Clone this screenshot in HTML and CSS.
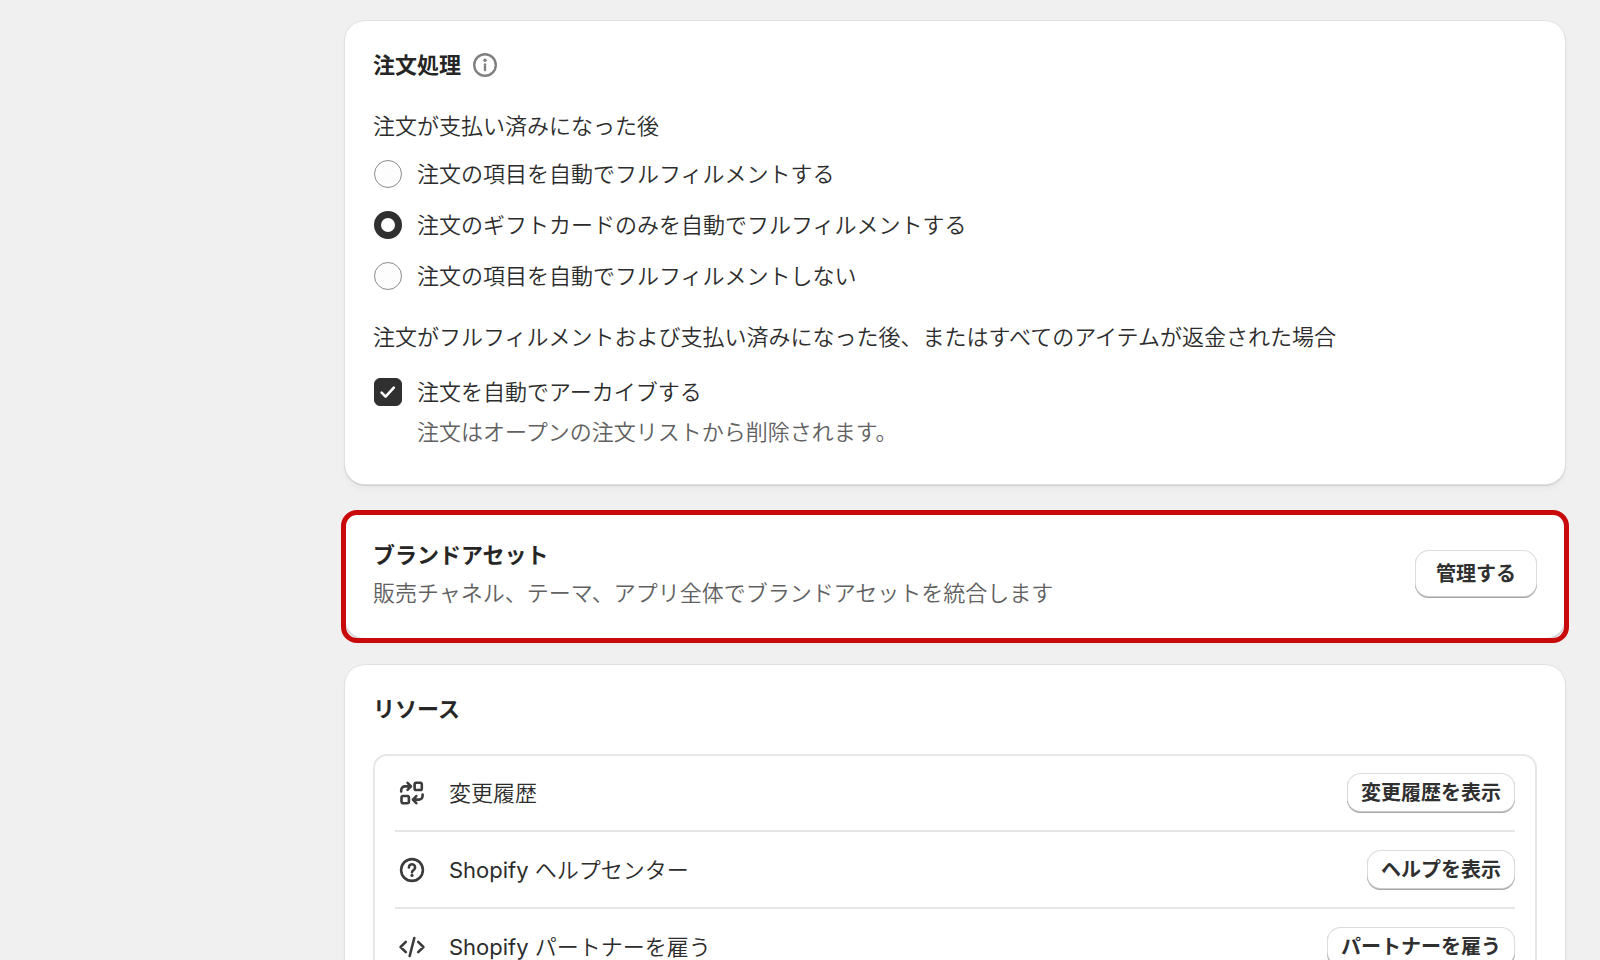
FILE: index.html
```html
<!DOCTYPE html>
<html lang="ja">
<head>
<meta charset="utf-8">
<title>注文処理</title>
<link rel="stylesheet" href="styles.css">
</head>
<body>
<main class="page">
  <section class="card orders">
    <div class="card-title">
      <h2>注文処理</h2>
      <svg class="info" viewBox="0 0 24 24" aria-hidden="true"><circle cx="12" cy="12" r="10.8"/><path d="M12 11.4v5.6"/><circle class="dot" cx="12" cy="7.2" r="1.7"/></svg>
    </div>
    <fieldset class="choices">
      <legend>注文が支払い済みになった後</legend>
      <label class="choice"><input type="radio" name="fulfill"><span>注文の項目を自動でフルフィルメントする</span></label>
      <label class="choice"><input type="radio" name="fulfill" checked><span>注文のギフトカードのみを自動でフルフィルメントする</span></label>
      <label class="choice"><input type="radio" name="fulfill"><span>注文の項目を自動でフルフィルメントしない</span></label>
    </fieldset>
    <fieldset class="archive">
      <legend>注文がフルフィルメントおよび支払い済みになった後、またはすべてのアイテムが返金された場合</legend>
      <label class="choice"><span class="tick"><input type="checkbox" checked aria-describedby="archive-help"><svg viewBox="0 0 28 28" aria-hidden="true"><path d="M7.6 14.6l4 4 8.2-9"/></svg></span><span>注文を自動でアーカイブする</span></label>
      <p class="help" id="archive-help">注文はオープンの注文リストから削除されます。</p>
    </fieldset>
  </section>

  <section class="card brand">
    <div class="brand-text">
      <h2>ブランドアセット</h2>
      <p>販売チャネル、テーマ、アプリ全体でブランドアセットを統合します</p>
    </div>
    <button class="button large" type="button">管理する</button>
  </section>

  <section class="card resources">
    <h2>リソース</h2>
    <ul class="list">
      <li class="row">
        <svg class="icon" viewBox="0 0 28 28" aria-hidden="true"><rect x="16.6" y="3.8" width="7.2" height="7.2" rx="1.6"/><rect x="3.5" y="17" width="7.4" height="7.2" rx="1.6"/><path d="M3.2 12.4v-1.2a3.8 3.8 0 0 1 3.8-3.8h5M9.6 3.8l3.4 3.6-3.4 3.4"/><path d="M24.6 15.6v1.2a3.8 3.8 0 0 1-3.8 3.8h-5.4M18.3 17.2l-3.4 3.4 3.4 3.6"/></svg>
        <span class="row-name">変更履歴</span>
        <button class="button" type="button">変更履歴を表示</button>
      </li>
      <li class="row">
        <svg class="icon" viewBox="0 0 28 28" aria-hidden="true"><circle cx="14" cy="14" r="10.9"/><path d="M10.9 11.4a3.1 3.1 0 1 1 4.8 2.6c-1 .65-1.7 1.1-1.7 2.2"/><circle class="dot" cx="14" cy="19.4" r="1.6"/></svg>
        <span class="row-name"><span class="latin">Shopify</span> ヘルプセンター</span>
        <button class="button" type="button">ヘルプを表示</button>
      </li>
      <li class="row">
        <svg class="icon" viewBox="0 0 28 28" aria-hidden="true"><path d="M7.8 8.8l-5.2 5.2 5.2 5.2M20.2 8.8l5.2 5.2-5.2 5.2M16.3 5l-4.6 18"/></svg>
        <span class="row-name"><span class="latin">Shopify</span> パートナーを雇う</span>
        <button class="button" type="button">パートナーを雇う</button>
      </li>
    </ul>
  </section>
</main>
</body>
</html>
```
FILE: styles.css
```css
* {
  box-sizing: border-box;
}

body {
  margin: 0;
  height: 100vh;
  overflow: hidden;
  background: #f0f0f0;
  color: #2c2c2c;
  font-family: Inter, "Noto Sans CJK JP", sans-serif;
  font-size: 22px;
  font-weight: 350;
  line-height: 32px;
}

.page {
  height: 100%;
  padding: 21px 35px 27px 345px;
  overflow-y: auto;
  scrollbar-width: none;
}

h2,
p,
ul,
fieldset {
  margin: 0;
  padding: 0;
  border: 0;
}

h2 {
  color: #262626;
  font-size: 22px;
  font-weight: 600;
  line-height: 32px;
}

.card {
  margin-bottom: 27px;
  padding: 28px;
  border-radius: 20px;
  background: #fff;
  box-shadow: 0 0 0 1px #e1e1e1, 0 1px 0 1px #cfcfcf, 0 5px 6px rgba(0, 0, 0, 0.04);
}

/* Order processing */

.orders {
  padding-bottom: 36px;
}

.card-title {
  display: flex;
  align-items: center;
  gap: 12px;
}

.info {
  width: 24px;
  height: 24px;
  fill: none;
  stroke: #808080;
  stroke-width: 2.4;
  stroke-linecap: round;
}

.info .dot {
  fill: #808080;
  stroke: none;
}

.choices,
.archive {
  display: flex;
  flex-direction: column;
  gap: 17px;
  margin-top: 29px;
}

legend {
  padding: 0;
  margin-bottom: 15px;
}

.archive {
  gap: 8px;
  margin-top: 28px;
}

.archive legend {
  margin-bottom: 23px;
}

.choice {
  display: flex;
  align-items: center;
  gap: 15px;
  min-height: 34px;
}

.archive .choice {
  min-height: 32px;
}

.choice input {
  flex: none;
  width: 28px;
  height: 28px;
  margin: 0 0 0 1px;
  appearance: none;
  border: 1px solid #8a8a8a;
  background: #fdfdfd;
}

.choice input[type="radio"] {
  border-radius: 50%;
}

.choice input[type="radio"]:checked {
  border: 7px solid #303030;
  background: #fff;
}

.tick {
  position: relative;
  display: flex;
}

.choice input[type="checkbox"] {
  border-radius: 6px;
}

.choice input[type="checkbox"]:checked {
  border-color: #303030;
  background: #303030;
}

.tick svg {
  position: absolute;
  inset: 0 0 0 1px;
  fill: none;
  stroke: #fff;
  stroke-width: 2.6;
  stroke-linecap: round;
  stroke-linejoin: round;
  pointer-events: none;
}

.help {
  padding-left: 44px;
  color: #616161;
}

/* Brand assets, outlined in red */

.brand {
  position: relative;
  display: flex;
  align-items: center;
  justify-content: space-between;
  gap: 24px;
  padding-bottom: 29px;
}

.brand::after {
  content: "";
  position: absolute;
  inset: -1px -4px -5px;
  border: 5px solid #c80a0a;
  border-radius: 16px;
  pointer-events: none;
}

.brand-text {
  display: flex;
  flex-direction: column;
  gap: 6px;
}

.brand-text p {
  color: #616161;
}

.button {
  flex: none;
  min-height: 40px;
  padding: 0 14px;
  border: 0;
  border-radius: 14px;
  background: #fff;
  box-shadow: inset 0 -1px 0 0 #a8a8a8, inset 0 -2px 0 0 #cccccc, inset 0 0 0 1px #dcdcdc;
  color: #303030;
  font-family: inherit;
  font-size: 20px;
  font-weight: 600;
  line-height: 32px;
}

.button.large {
  min-height: 48px;
  padding: 0 21px;
}

/* Resources */

.list {
  margin-top: 29px;
  padding: 0 20px;
  border: 2px solid #e7e7e7;
  border-radius: 14px;
  list-style: none;
}

.row {
  display: flex;
  align-items: center;
  min-height: 74px;
}

.row + .row {
  min-height: 77px;
  border-top: 2px solid #e5e5e5;
}

.icon {
  flex: none;
  width: 28px;
  height: 28px;
  margin: 0 23px 0 3px;
  fill: none;
  stroke: #3c3c3c;
  stroke-width: 2.6;
  stroke-linecap: round;
  stroke-linejoin: round;
}

.icon .dot {
  fill: #3c3c3c;
  stroke: none;
}

.row-name {
  flex: 1;
}

.latin {
  font-weight: 400;
}
```
